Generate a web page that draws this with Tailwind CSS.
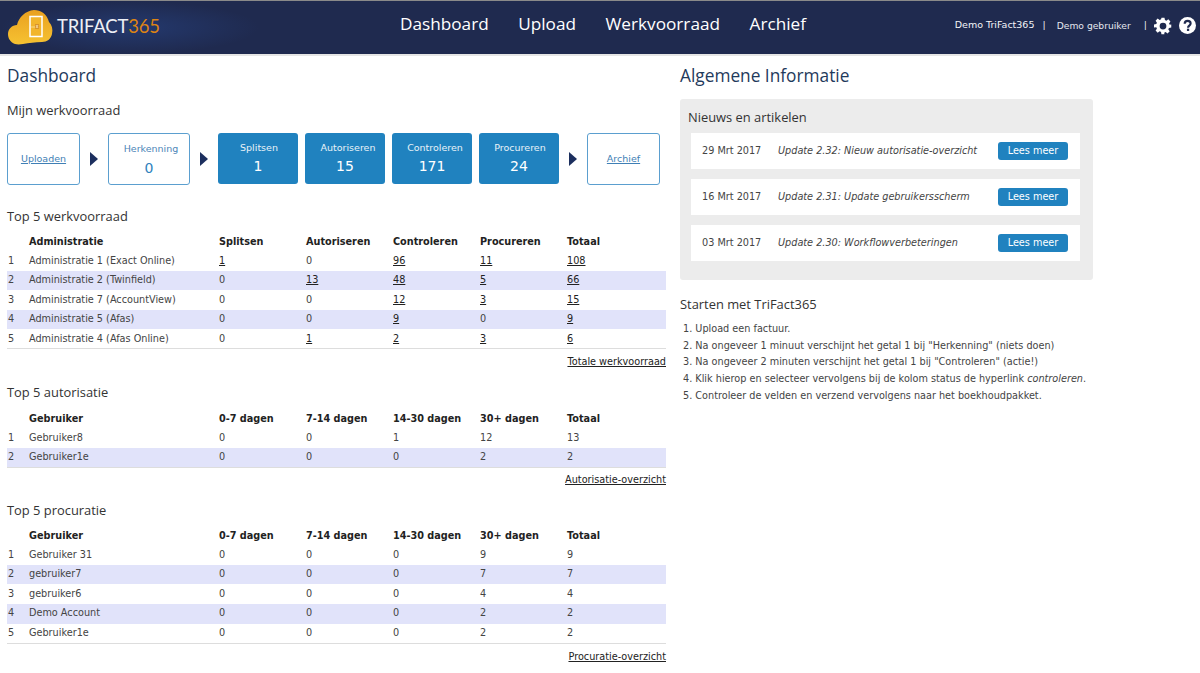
<!DOCTYPE html>
<html lang="nl">
<head>
<meta charset="UTF-8">
<title>TriFact365 Dashboard</title>
<script src="https://cdn.jsdelivr.net/npm/@tailwindcss/browser@4"></script>
</head>
<body class="bg-white h-[673px] overflow-hidden font-['DejaVu_Sans',sans-serif] text-[9.7px] text-[#444]">
<!-- Header -->
<header class="h-[56px] bg-[#1f2a4f] border-t border-[#8a8a8a] border-b-2 border-b-[#e5e5e5] flex items-center relative">
  <div class="absolute left-0 top-0 w-[260px] h-[53px] bg-[radial-gradient(ellipse_at_center,#24396e_0%,#1f2a4f_70%)]"></div>
  <div class="relative w-[400px] flex items-center pl-[7px] shrink-0 mt-[-2px]">
    <svg width="47" height="36" viewBox="0 0 47 36">
      <defs><linearGradient id="cl" x1="0" y1="0" x2="0" y2="1"><stop offset="0" stop-color="#e9a01f"/><stop offset="1" stop-color="#f6c232"/></linearGradient></defs>
      <path d="M8 35C3 33 1 29 1 25C1 20 5 16 10 16C12 8 18 2 27 1C34 1 40 5 42 13C45 16 46 20 45 25C44 30 40 33 35 33C28 33 22 34 16 35C13 35.500 10 35.500 8 35Z" fill="url(#cl)"/>
      <path d="M23 7.500H35V27.500H23Z" fill="#f2b52c" stroke="#fff" stroke-width="1.500"/>
      <path d="M24 18H28" stroke="#f7d98c" stroke-width="1"/>
      <path d="M28 15h4v5h-4z" fill="#d9932a"/>
      <path d="M29 16l2 3M31 16l-2 3" stroke="#f7e2ae" stroke-width=".8"/>
    </svg>
    <span class="ml-[3px] text-[18.5px] leading-none tracking-[-.2px] font-['Lato',sans-serif] text-[#eef0f5]">TRIFACT<span class="text-[#dd8414]">365</span></span>
  </div>
  <nav class="relative flex gap-[29.5px] font-['Open_Sans',sans-serif] text-[17.2px] text-white mt-[-8px]">
    <span>Dashboard</span><span>Upload</span><span>Werkvoorraad</span><span>Archief</span>
  </nav>
  <div class="relative ml-auto flex items-center text-[9.5px] text-[#e6e8ee] mt-[-4px]">
    <span class="text-[#f4f5f8]">Demo TriFact365</span>
    <span class="ml-[8px]">|</span>
    <span class="ml-[11px] text-[9.2px]">Demo gebruiker</span>
    <span class="ml-[13px]">|</span>
    <svg width="18" height="18" viewBox="0 0 24 24" class="ml-[7px]" fill="#fff"><path fill-rule="evenodd" d="M10 1h4l.6 3.100 1.900.8 2.600-1.800 2.800 2.800-1.800 2.600.8 1.900L23 10v4l-3.100.6-.8 1.900 1.800 2.600-2.800 2.800-2.600-1.800-1.900.8L13.900 23h-4l-.5-3.100-1.900-.8-2.600 1.800-2.800-2.800 1.800-2.600-.8-1.900L0 14v-4l3.100-.6.8-1.900L2.100 4.900l2.800-2.800 2.600 1.800 1.900-.8zM12 7.500a4.500 4.500 0 1 0 0 9 4.500 4.500 0 0 0 0-9z"/></svg>
    <svg width="17" height="17" viewBox="0 0 24 24" class="ml-[7px] mr-[4px]"><circle cx="12" cy="12" r="12" fill="#fff"/><path d="M8 9.500C8 7 9.800 5.500 12.200 5.500C14.600 5.500 16.400 7 16.400 9.200C16.400 12.200 12.800 12.200 12.800 15" fill="none" stroke="#1f2a4f" stroke-width="3"/><rect x="11.200" y="16.500" width="3.200" height="3.200" fill="#1f2a4f"/></svg>
  </div>
</header>

<main class="flex pl-[7px]">
  <!-- Left column -->
  <section class="w-[659px] shrink-0">
    <h1 class="font-['Open_Sans',sans-serif] text-[17.3px] leading-[24px] text-[#1f3a5c] mt-[8px]">Dashboard</h1>
    <h2 class="font-['Open_Sans',sans-serif] text-[12.9px] leading-[20px] text-[#333] mt-[12px]">Mijn werkvoorraad</h2>

    <div class="flex items-start mt-[13px] h-[52px] text-[9.5px]">
      <div class="w-[73px] h-[52px] flex items-center justify-center rounded-[3px] border border-[#5b9fcf] text-[#3f7fb5] underline">Uploaden</div>
      <div class="w-[8px] h-[14px] mx-[10px] self-center bg-[#1c2f5e] [clip-path:polygon(0_0,100%_50%,0_100%)]"></div>
      <div class="w-[82px] h-[52px] flex flex-col items-center rounded-[3px] border border-[#5b9fcf] text-[#4d86b8] pt-[8px]">
        <span class="ml-[4px]">Herkenning</span><span class="text-[14px] leading-[18px] mt-[3px] text-[#2f82bd]">0</span>
      </div>
      <div class="w-[8px] h-[14px] mx-[10px] self-center bg-[#1c2f5e] [clip-path:polygon(0_0,100%_50%,0_100%)]"></div>
      <div class="w-[80px] h-[51px] flex flex-col items-center rounded-[3px] bg-[#2082bf] text-[#e8f2f8] pt-[8px]">
        <span class="ml-[2px]">Splitsen</span><span class="text-[14px] leading-[18px] mt-[2px] text-white">1</span>
      </div>
      <div class="w-[80px] h-[51px] ml-[7px] flex flex-col items-center rounded-[3px] bg-[#2082bf] text-[#e8f2f8] pt-[8px]">
        <span class="ml-[6px]">Autoriseren</span><span class="text-[14px] leading-[18px] mt-[2px] text-white">15</span>
      </div>
      <div class="w-[80px] h-[51px] ml-[7px] flex flex-col items-center rounded-[3px] bg-[#2082bf] text-[#e8f2f8] pt-[8px]">
        <span class="ml-[6px]">Controleren</span><span class="text-[14px] leading-[18px] mt-[2px] text-white">171</span>
      </div>
      <div class="w-[80px] h-[51px] ml-[7px] flex flex-col items-center rounded-[3px] bg-[#2082bf] text-[#e8f2f8] pt-[8px]">
        <span class="ml-[2px]">Procureren</span><span class="text-[14px] leading-[18px] mt-[2px] text-white">24</span>
      </div>
      <div class="w-[8px] h-[14px] mx-[10px] self-center bg-[#1c2f5e] [clip-path:polygon(0_0,100%_50%,0_100%)]"></div>
      <div class="w-[73px] h-[52px] flex items-center justify-center rounded-[3px] border border-[#5b9fcf] text-[#3f7fb5] underline">Archief</div>
    </div>

    <h2 class="font-['Open_Sans',sans-serif] text-[12.9px] leading-[20px] text-[#333] mt-[21px]">Top 5 werkvoorraad</h2>
    <table class="w-[659px] table-fixed mt-[7px] border-b border-[#ddd]">
      <colgroup><col class="w-[22px]"><col class="w-[190px]"><col class="w-[87px]"><col class="w-[87px]"><col class="w-[87px]"><col class="w-[87px]"><col class="w-[99px]"></colgroup>
      <thead class="text-left text-[#222]">
        <tr class="h-[18px]"><th></th><th>Administratie</th><th>Splitsen</th><th>Autoriseren</th><th>Controleren</th><th>Procureren</th><th>Totaal</th></tr>
      </thead>
      <tbody>
        <tr class="h-[19.6px]"><td class="pl-px">1</td><td>Administratie 1 (Exact Online)</td><td class="underline text-[#222]">1</td><td>0</td><td class="underline text-[#222]">96</td><td class="underline text-[#222]">11</td><td class="underline text-[#222]">108</td></tr>
        <tr class="h-[19.6px] bg-[#e1e3fa]"><td class="pl-px">2</td><td>Administratie 2 (Twinfield)</td><td>0</td><td class="underline text-[#222]">13</td><td class="underline text-[#222]">48</td><td class="underline text-[#222]">5</td><td class="underline text-[#222]">66</td></tr>
        <tr class="h-[19.6px]"><td class="pl-px">3</td><td>Administratie 7 (AccountView)</td><td>0</td><td>0</td><td class="underline text-[#222]">12</td><td class="underline text-[#222]">3</td><td class="underline text-[#222]">15</td></tr>
        <tr class="h-[19.6px] bg-[#e1e3fa]"><td class="pl-px">4</td><td>Administratie 5 (Afas)</td><td>0</td><td>0</td><td class="underline text-[#222]">9</td><td>0</td><td class="underline text-[#222]">9</td></tr>
        <tr class="h-[19.6px]"><td class="pl-px">5</td><td>Administratie 4 (Afas Online)</td><td>0</td><td class="underline text-[#222]">1</td><td class="underline text-[#222]">2</td><td class="underline text-[#222]">3</td><td class="underline text-[#222]">6</td></tr>
      </tbody>
    </table>
    <div class="text-right text-[#222] underline mt-[7px] leading-[12px]">Totale werkvoorraad</div>

    <h2 class="font-['Open_Sans',sans-serif] text-[12.9px] leading-[20px] text-[#333] mt-[14px]">Top 5 autorisatie</h2>
    <table class="w-[659px] table-fixed mt-[8px] border-b border-[#ddd]">
      <colgroup><col class="w-[22px]"><col class="w-[190px]"><col class="w-[87px]"><col class="w-[87px]"><col class="w-[87px]"><col class="w-[87px]"><col class="w-[99px]"></colgroup>
      <thead class="text-left text-[#222]">
        <tr class="h-[18px]"><th></th><th>Gebruiker</th><th>0-7 dagen</th><th>7-14 dagen</th><th>14-30 dagen</th><th>30+ dagen</th><th>Totaal</th></tr>
      </thead>
      <tbody>
        <tr class="h-[19.6px]"><td class="pl-px">1</td><td>Gebruiker8</td><td>0</td><td>0</td><td>1</td><td>12</td><td>13</td></tr>
        <tr class="h-[19.6px] bg-[#e1e3fa]"><td class="pl-px">2</td><td>Gebruiker1e</td><td>0</td><td>0</td><td>0</td><td>2</td><td>2</td></tr>
      </tbody>
    </table>
    <div class="text-right text-[#222] underline mt-[6px] leading-[12px]">Autorisatie-overzicht</div>

    <h2 class="font-['Open_Sans',sans-serif] text-[12.9px] leading-[20px] text-[#333] mt-[14px]">Top 5 procuratie</h2>
    <table class="w-[659px] table-fixed mt-[7px] border-b border-[#ddd]">
      <colgroup><col class="w-[22px]"><col class="w-[190px]"><col class="w-[87px]"><col class="w-[87px]"><col class="w-[87px]"><col class="w-[87px]"><col class="w-[99px]"></colgroup>
      <thead class="text-left text-[#222]">
        <tr class="h-[18px]"><th></th><th>Gebruiker</th><th>0-7 dagen</th><th>7-14 dagen</th><th>14-30 dagen</th><th>30+ dagen</th><th>Totaal</th></tr>
      </thead>
      <tbody>
        <tr class="h-[19.6px]"><td class="pl-px">1</td><td>Gebruiker 31</td><td>0</td><td>0</td><td>0</td><td>9</td><td>9</td></tr>
        <tr class="h-[19.6px] bg-[#e1e3fa]"><td class="pl-px">2</td><td>gebruiker7</td><td>0</td><td>0</td><td>0</td><td>7</td><td>7</td></tr>
        <tr class="h-[19.6px]"><td class="pl-px">3</td><td>gebruiker6</td><td>0</td><td>0</td><td>0</td><td>4</td><td>4</td></tr>
        <tr class="h-[19.6px] bg-[#e1e3fa]"><td class="pl-px">4</td><td>Demo Account</td><td>0</td><td>0</td><td>0</td><td>2</td><td>2</td></tr>
        <tr class="h-[19.6px]"><td class="pl-px">5</td><td>Gebruiker1e</td><td>0</td><td>0</td><td>0</td><td>2</td><td>2</td></tr>
      </tbody>
    </table>
    <div class="text-right text-[#222] underline mt-[7px] leading-[12px]">Procuratie-overzicht</div>
  </section>

  <!-- Right column -->
  <section class="w-[413px] ml-[14px] shrink-0">
    <h1 class="font-['Open_Sans',sans-serif] text-[17.3px] leading-[24px] text-[#1f3a5c] mt-[8px]">Algemene Informatie</h1>
    <div class="mt-[11px] h-[181px] rounded-[3px] bg-[#ececec] pl-[11px] pr-[13px] pt-[8px]">
      <h2 class="font-['Open_Sans',sans-serif] text-[12.9px] leading-[20px] text-[#333] ml-[-3px]">Nieuws en artikelen</h2>
      <div class="flex flex-col gap-[10px] mt-[6px]">
        <div class="h-[36px] bg-white flex items-center pl-[11px] pr-[12px]">
          <span class="w-[76px]">29 Mrt 2017</span>
          <span class="italic">Update 2.32: Nieuw autorisatie-overzicht</span>
          <span class="ml-auto w-[70px] h-[18px] rounded-[3px] bg-[#2082bf] text-white flex items-center justify-center">Lees meer</span>
        </div>
        <div class="h-[36px] bg-white flex items-center pl-[11px] pr-[12px]">
          <span class="w-[76px]">16 Mrt 2017</span>
          <span class="italic">Update 2.31: Update gebruikersscherm</span>
          <span class="ml-auto w-[70px] h-[18px] rounded-[3px] bg-[#2082bf] text-white flex items-center justify-center">Lees meer</span>
        </div>
        <div class="h-[36px] bg-white flex items-center pl-[11px] pr-[12px]">
          <span class="w-[76px]">03 Mrt 2017</span>
          <span class="italic">Update 2.30: Workflowverbeteringen</span>
          <span class="ml-auto w-[70px] h-[18px] rounded-[3px] bg-[#2082bf] text-white flex items-center justify-center">Lees meer</span>
        </div>
      </div>
    </div>
    <h2 class="font-['Open_Sans',sans-serif] text-[12.9px] leading-[20px] text-[#333] mt-[14px]">Starten met TriFact365</h2>
    <ol class="mt-[7px] leading-[16.7px] pl-[3px]">
      <li>1. Upload een factuur.</li>
      <li>2. Na ongeveer 1 minuut verschijnt het getal 1 bij "Herkenning" (niets doen)</li>
      <li>3. Na ongeveer 2 minuten verschijnt het getal 1 bij "Controleren" (actie!)</li>
      <li>4. Klik hierop en selecteer vervolgens bij de kolom status de hyperlink <em>controleren</em>.</li>
      <li>5. Controleer de velden en verzend vervolgens naar het boekhoudpakket.</li>
    </ol>
  </section>
</main>
</body>
</html>
